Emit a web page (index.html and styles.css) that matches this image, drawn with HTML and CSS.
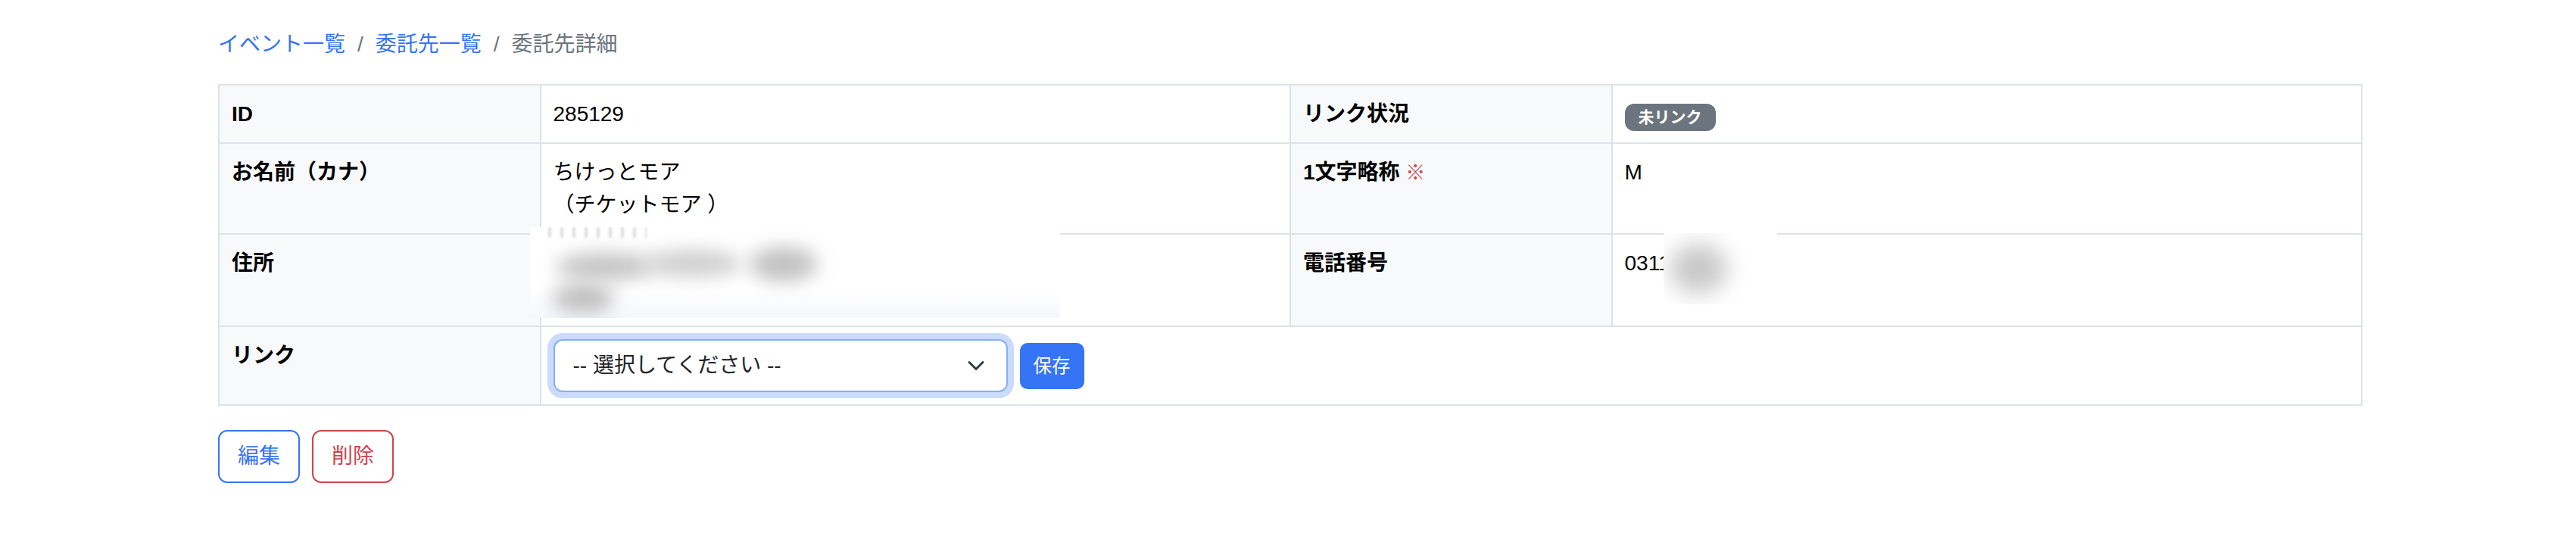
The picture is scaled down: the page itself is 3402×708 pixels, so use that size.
FILE: index.html
```html
<!DOCTYPE html>
<html lang="ja">
<head>
<meta charset="utf-8">
<title>委託先詳細</title>
<link rel="stylesheet" href="styles.css">
</head>
<body>
<div class="page">
  <nav class="crumbs">
    <a class="crumb-link" href="#">イベント一覧</a>
    <span class="sep">/</span>
    <a class="crumb-link" href="#">委託先一覧</a>
    <span class="sep">/</span>
    <span class="crumb-current">委託先詳細</span>
  </nav>

  <table class="detail">
    <colgroup>
      <col class="col-label">
      <col class="col-value">
      <col class="col-label">
      <col class="col-value">
    </colgroup>
    <tr>
      <th>ID</th>
      <td>285129</td>
      <th>リンク状況</th>
      <td><span class="badge">未リンク</span></td>
    </tr>
    <tr>
      <th>お名前（カナ）</th>
      <td>ちけっとモア<br>（チケットモア ）</td>
      <th>1文字略称 <span class="req">※</span></th>
      <td>M</td>
    </tr>
    <tr>
      <th>住所</th>
      <td class="addr">
        <div class="addr-line"></div>
        <div class="addr-line"></div>
        <div class="mask mask-addr">
          <div class="stripes"></div>
          <div class="blob blob-a1"></div>
          <div class="blob blob-a2"></div>
          <div class="blob blob-a3"></div>
          <div class="blob blob-a4"></div>
        </div>
      </td>
      <th>電話番号</th>
      <td class="tel">0311<div class="mask mask-tel"><div class="blob blob-t1"></div></div></td>
    </tr>
    <tr>
      <th>リンク</th>
      <td colspan="3">
        <div class="link-form">
          <div class="select">
            <span>-- 選択してください --</span>
            <svg class="chev" viewBox="0 0 16 16" width="24" height="24"><path d="m2 5 6 6 6-6" fill="none" stroke="#343a40" stroke-width="2" stroke-linecap="round" stroke-linejoin="round"/></svg>
          </div>
          <button class="btn-save" type="button">保存</button>
        </div>
      </td>
    </tr>
  </table>

  <div class="actions">
    <button class="btn btn-edit" type="button">編集</button>
    <button class="btn btn-delete" type="button">削除</button>
  </div>
</div>
</body>
</html>
```
FILE: styles.css
```css
html, body {
  margin: 0;
  padding: 0;
  background: #ffffff;
}

body {
  font-family: "Liberation Sans", "Noto Sans CJK JP", sans-serif;
  font-size: 28px;
  line-height: 42px;
  color: #212529;
}

.page {
  width: 2832px;
  padding: 38px 0 0 288px;
}

.crumbs {
  display: flex;
  align-items: baseline;
  margin-bottom: 31px;
}

.crumb-link {
  color: #3574f5;
  text-decoration: none;
}

.sep {
  padding: 0 16px;
  color: #6c757d;
}

.crumb-current {
  color: #6c757d;
}

.detail {
  width: 2832px;
  border-collapse: collapse;
  table-layout: fixed;
  line-height: 43px;
}

.col-label {
  width: 15%;
}

.col-value {
  width: 35%;
}

.detail th,
.detail td {
  border: 2px solid #dee2e6;
  padding: 16px;
  vertical-align: top;
  text-align: left;
}

.detail th {
  background: #f8f9fa;
  font-weight: 700;
  color: #000000;
}

.detail td {
  color: #000000;
}

.badge {
  display: inline-block;
  background: #6c757d;
  color: #ffffff;
  font-size: 21px;
  font-weight: 700;
  line-height: 22px;
  padding: 7px 18px;
  border-radius: 12px;
  vertical-align: baseline;
  position: relative;
  top: 2px;
}

.req {
  color: #d0434d;
  font-size: 26px;
  font-weight: 700;
}

.addr,
.tel {
  position: relative;
}

.addr-line {
  height: 44px;
}

.mask {
  position: absolute;
  z-index: 2;
  background: #ffffff;
  overflow: hidden;
}

.mask-addr {
  left: -15px;
  top: -10px;
  width: 700px;
  height: 120px;
  background: linear-gradient(180deg, #ffffff 0%, #ffffff 70%, #f6f7fd 100%);
}

.stripes {
  position: absolute;
  left: 24px;
  top: 0;
  width: 130px;
  height: 14px;
  background: repeating-linear-gradient(90deg, #dedede 0 4px, #ffffff 4px 16px);
  filter: blur(1.5px);
}

.blob {
  position: absolute;
  border-radius: 50%;
  filter: blur(12px);
}

.blob-a1 {
  left: 34px;
  top: 34px;
  width: 130px;
  height: 36px;
  background: #c4c4c4;
}

.blob-a2 {
  left: 150px;
  top: 30px;
  width: 130px;
  height: 36px;
  background: #cfcfcf;
}

.blob-a3 {
  left: 290px;
  top: 26px;
  width: 90px;
  height: 46px;
  background: #c2c2c2;
}

.blob-a4 {
  left: 30px;
  top: 74px;
  width: 80px;
  height: 40px;
  background: #bfbfbf;
}

.mask-tel {
  left: 67px;
  top: -2px;
  width: 150px;
  height: 94px;
}

.blob-t1 {
  left: 8px;
  top: 14px;
  width: 76px;
  height: 66px;
  background: #c8c8c8;
  filter: blur(15px);
}

.link-form {
  display: flex;
  align-items: center;
  gap: 16px;
}

.select {
  box-sizing: border-box;
  width: 600px;
  height: 70px;
  display: flex;
  align-items: center;
  justify-content: space-between;
  padding: 0 28px 0 24px;
  border: 2px solid #86aef7;
  border-radius: 12px;
  box-shadow: 0 0 0 8px rgba(53, 116, 245, 0.26);
  background: #ffffff;
  color: #212529;
  line-height: 42px;
}

.chev {
  display: block;
}

.btn-save {
  font-family: inherit;
  font-size: 24.5px;
  line-height: 37px;
  padding: 10px 16px;
  border: 2px solid #3574f5;
  border-radius: 10px;
  background: #3574f5;
  color: #ffffff;
}

.actions {
  display: flex;
  gap: 16px;
  margin-top: 32px;
}

.btn {
  font-family: inherit;
  font-size: 28px;
  line-height: 42px;
  padding: 12px 24px;
  border-radius: 12px;
  background: transparent;
  border: 2px solid;
}

.btn-edit {
  color: #3574f5;
  border-color: #3574f5;
}

.btn-delete {
  color: #d0434d;
  border-color: #d0434d;
}
```
